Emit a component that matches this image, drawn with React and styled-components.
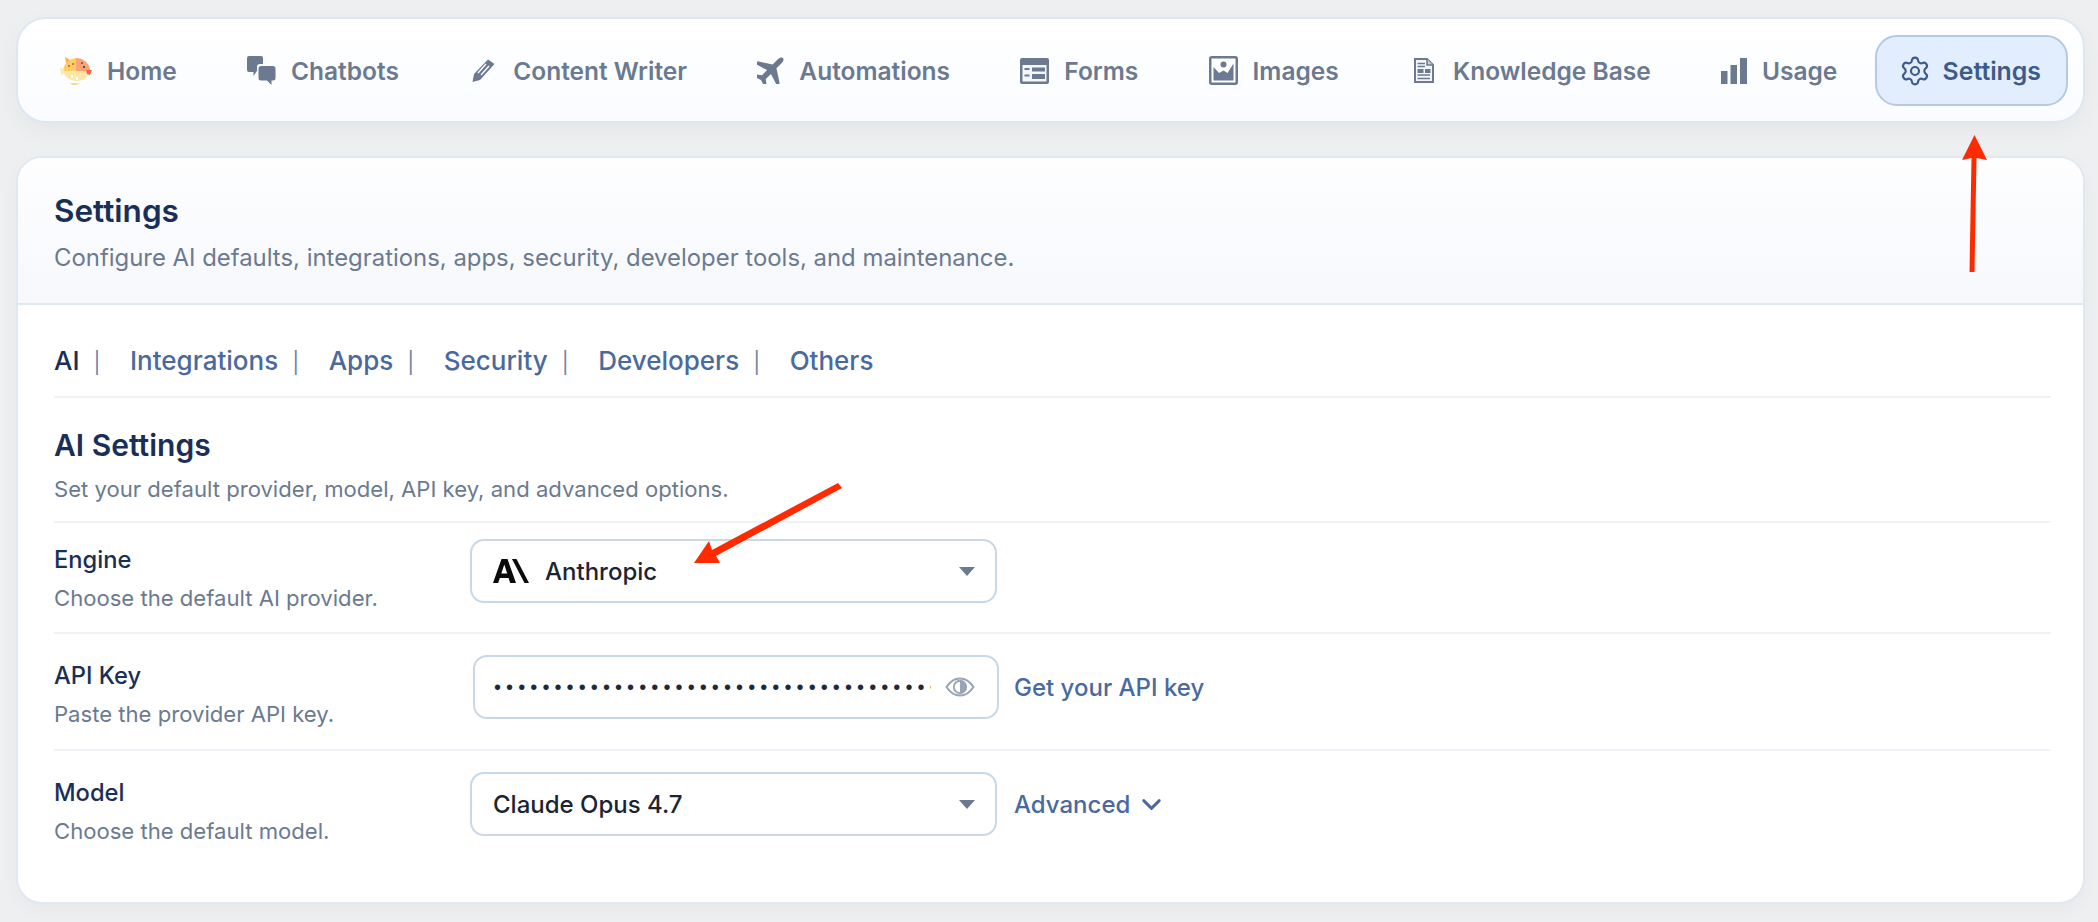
import styled, { createGlobalStyle } from "styled-components";
import { Settings as Gear, ChevronDown } from "lucide-react";

const GlobalStyle = createGlobalStyle`
  html, body {
    margin: 0;
    background: #eeeff1;
    font-family: Inter, "Liberation Sans", sans-serif;
  }
  * { box-sizing: border-box; }
`;

const HomeIcon = () => (
  <svg width="32" height="30" viewBox="0 0 32 30">
    <path d="M3 15 A14 14 0 0 1 16 2 V15 Z" fill="#fbcf63" />
    <path d="M16 2 A14 14 0 0 1 30 13 L30 15 H16 Z" fill="#fca374" />
    <path d="M3 15 H30 L28 20 A14 12 0 0 1 3 15 Z" fill="#fce7a8" />
    <path d="M26 14 H32 L30 19 L27 18 Z" fill="#f9634a" />
    <path d="M0 11 L4 14 L4 18 L1 19 Z" fill="#fde9b5" />
    <path d="M5 1 L10 4 L6 7 Z" fill="#fbb04d" />
    <rect x="8" y="9" width="2" height="2" fill="#ee6a3f" />
    <rect x="12" y="7" width="2" height="2" fill="#ee6a3f" />
    <rect x="21" y="6" width="2" height="2" fill="#b0574a" />
    <rect x="23" y="10" width="2" height="2" fill="#3f5578" />
    <rect x="11" y="19" width="2" height="3" fill="#fff" />
    <rect x="16" y="21" width="2" height="3" fill="#fff" />
    <path d="M10 27 h10 l-4 2 h-4 z" fill="#fbd98a" />
  </svg>
);

const ChatIcon = () => (
  <svg width="29" height="29" viewBox="0 0 29 29" fill="#6b7a90">
    <path d="M2 0 H14 A2 2 0 0 1 16 2 V8 H13 A3 3 0 0 0 10 11 V15 L6.500 20 V16 H2 A2 2 0 0 1 0 14 V2 A2 2 0 0 1 2 0 Z" />
    <path d="M14 10 H26 A2.500 2.500 0 0 1 28.500 12.500 V22 A2.500 2.500 0 0 1 26 24.500 H24.500 V29 L20 24.500 H14 A2.500 2.500 0 0 1 11.500 22 V12.500 A2.500 2.500 0 0 1 14 10 Z" />
  </svg>
);

const PencilIcon = () => (
  <svg width="23" height="23" viewBox="0 0 23 23">
    <path d="M16 0.500 L22.500 5 L8 21 L0.500 23 L2 15 Z" fill="#6b7a90" />
    <path d="M6 14 L14 5 M9 16 L17 7" stroke="#fff" strokeWidth="1.300" />
  </svg>
);

const PlaneIcon = () => (
  <svg width="27" height="27" viewBox="0 0 26 26" fill="#6b7a90">
    <path
      transform="rotate(45 13 13)"
      d="M13 -4 c1.500 0 2.600 2 2.600 4 V7.500 L28 15.500 v3.500 L15.600 15 V22 L19.500 25 V28 L13 26 L6.500 28 V25 L10.400 22 V15 L-2 19 V15.500 L10.400 7.500 V0 c0 -2 1.100 -4 2.600 -4 Z"
    />
  </svg>
);

const FormsIcon = () => (
  <svg width="29" height="26" viewBox="0 0 29 26">
    <rect width="29" height="26" rx="2" fill="#6b7a90" />
    <rect x="2.500" y="7" width="24" height="16.500" fill="#f4f6fa" />
    <rect x="4.500" y="10" width="5" height="2" fill="#6b7a90" />
    <rect x="4.500" y="16.500" width="5" height="2" fill="#6b7a90" />
    <rect x="12" y="9.500" width="13" height="4" fill="#6b7a90" />
    <rect x="12" y="16" width="13" height="5" fill="#6b7a90" />
  </svg>
);

const ImageIcon = () => (
  <svg width="29" height="29" viewBox="0 0 29 29">
    <rect x="1.250" y="1.250" width="26.500" height="26.500" rx="1.500" fill="#fff" stroke="#6b7a90" strokeWidth="2.500" />
    <circle cx="14.500" cy="8.500" r="3" fill="#6b7a90" />
    <path d="M4.500 24.500 V11 L10 17 L14.500 14.500 L18.500 17 L24.500 7.500 V24.500 Z" fill="#6b7a90" />
  </svg>
);

const DocIcon = () => (
  <svg width="20" height="25" viewBox="0 0 20 25">
    <path d="M1 1 H13 L19 7 V24 H1 Z" fill="#f4f6fa" stroke="#6b7a90" strokeWidth="2" />
    <path d="M13 1 V7 H19" fill="#c4ccd8" stroke="#6b7a90" strokeWidth="1.500" />
    <path d="M3.500 5.500 H11 M3.500 8.500 H11 M3.500 17 H16 M3.500 20.500 H16" stroke="#6b7a90" strokeWidth="1.500" />
    <rect x="3.500" y="11" width="6" height="4" fill="#6b7a90" />
    <rect x="11" y="11" width="5.500" height="4" fill="#6b7a90" />
  </svg>
);

const BarsIcon = () => (
  <svg width="26" height="26" viewBox="0 0 26 26" fill="#6b7a90">
    <rect x="0" y="13" width="6.500" height="13" />
    <rect x="9.500" y="7" width="6.500" height="19" />
    <rect x="19" y="0" width="7" height="26" />
  </svg>
);

const AnthropicLogo = () => (
  <svg width="36" height="24" viewBox="0 0 36 24" fill="#0b0b0b">
    <path d="M0 24 L8.500 0 H14.500 L23 24 H17.200 L15.600 19 H6.800 L5.200 24 Z M8.300 14.500 H14.200 L11.300 5.500 Z" />
    <path d="M19 0 H23.500 L36 24 H31.500 Z" />
  </svg>
);

const EyeIcon = () => (
  <svg width="30" height="20" viewBox="0 0 29 19">
    <path d="M1.500 9.500 C5 4 9.500 1.200 14.500 1.200 S24 4 27.500 9.500 C24 15 19.500 17.800 14.500 17.800 S5 15 1.500 9.500 Z" fill="none" stroke="#9aa5b4" strokeWidth="2" />
    <circle cx="14.500" cy="9.500" r="6" fill="none" stroke="#9aa5b4" strokeWidth="1.800" />
    <path d="M14.500 3.500 A6 6 0 0 1 14.500 15.500 Z" fill="#9aa5b4" />
  </svg>
);

const navItems = [
  { label: "Home", icon: <HomeIcon /> },
  { label: "Chatbots", icon: <ChatIcon /> },
  { label: "Content Writer", icon: <IconSlot><PencilIcon /></IconSlot> },
  { label: "Automations", icon: <PlaneIcon /> },
  { label: "Forms", icon: <FormsIcon /> },
  { label: "Images", icon: <ImageIcon /> },
  { label: "Knowledge Base", icon: <IconSlot><DocIcon /></IconSlot> },
  { label: "Usage", icon: <BarsIcon /> },
  { label: "Settings", icon: <NavGear size={32} strokeWidth={1.6} />, active: true },
];

const tabs = ["AI", "Integrations", "Apps", "Security", "Developers", "Others"];

const App = () => {
  return (
    <Page>
      <GlobalStyle />
      <Nav>
        {navItems.map((item) => (
          <NavItem key={item.label} $active={item.active}>
            {item.icon}
            <span>{item.label}</span>
          </NavItem>
        ))}
      </Nav>

      <Card>
        <CardHeader>
          <Title>Settings</Title>
          <Subtitle>Configure AI defaults, integrations, apps, security, developer tools, and maintenance.</Subtitle>
        </CardHeader>
        <CardBody>
          <Tabs>
            {tabs.map((tab, i) => (
              <Tab key={tab} $current={i === 0}>
                {tab}
                {i < tabs.length - 1 && <TabBar>|</TabBar>}
              </Tab>
            ))}
          </Tabs>

          <SectionTitle>AI Settings</SectionTitle>
          <SectionText>Set your default provider, model, API key, and advanced options.</SectionText>

          <Row $first>
            <RowText>
              <RowLabel>Engine</RowLabel>
              <RowHint>Choose the default AI provider.</RowHint>
            </RowText>
            <Field>
              <Select>
                <AnthropicLogo />
                <SelectValue>Anthropic</SelectValue>
                <Caret />
              </Select>
            </Field>
          </Row>

          <Row>
            <RowText>
              <RowLabel>API Key</RowLabel>
              <RowHint>Paste the provider API key.</RowHint>
            </RowText>
            <Field $shift>
              <KeyBox>
                <KeyInput type="password" readOnly value={"x".repeat(60)} />
                <EyeIcon />
              </KeyBox>
              <TextLink>Get your API key</TextLink>
            </Field>
          </Row>

          <Row>
            <RowText>
              <RowLabel>Model</RowLabel>
              <RowHint>Choose the default model.</RowHint>
            </RowText>
            <Field>
              <Select>
                <SelectValue>Claude Opus 4.7</SelectValue>
                <Caret />
              </Select>
              <TextLink>
                Advanced
                <ChevronDown size={31} strokeWidth={2.2} />
              </TextLink>
            </Field>
          </Row>
        </CardBody>
      </Card>

      {/* red arrows drawn on top of the screenshot */}
      <Annotations viewBox="0 0 2098 922">
        <path d="M1969.500 272 L1971.500 158 L1962 160 L1974.500 135 L1987 160 L1976.500 158 L1974.500 272 Z" fill="#ff2a00" />
        <path d="M838 483 L842 488 L716 556 L720 563 L694 563 L709 541 L712 550 Z" fill="#ff2a00" />
      </Annotations>
    </Page>
  );
};

export default App;

function NavGear(props) {
  return <GearGlyph {...props} />;
}

function IconSlot({ children }) {
  return <IconSlotBox>{children}</IconSlotBox>;
}

const GearGlyph = styled(Gear)`
  margin: 0 -3px;
`;

const IconSlotBox = styled.span`
  display: flex;
  justify-content: center;
  width: 29px;
`;

const Page = styled.div`
  position: relative;
  width: 2098px;
  height: 922px;
  padding: 17px 13px 0 16px;
  overflow: hidden;
`;

const Nav = styled.nav`
  display: flex;
  align-items: center;
  justify-content: space-between;
  height: 106px;
  padding: 1px 15px 0 16px;
  background: linear-gradient(#ffffff, #fafcff);
  border: 2px solid #dce7f4;
  border-radius: 30px;
  box-shadow: 0 8px 22px rgba(0, 0, 0, 0.04);
`;

const NavItem = styled.div`
  display: flex;
  align-items: center;
  gap: 15px;
  height: 71px;
  margin-left: ${(p) => (p.$active ? "-7px" : "0")};
  padding: 0 ${(p) => (p.$active ? "25px" : "24px")};
  border-radius: 22px;
  border: 2px solid ${(p) => (p.$active ? "#b4cae4" : "transparent")};
  background: ${(p) => (p.$active ? "#e2edfd" : "transparent")};
  color: ${(p) => (p.$active ? "#3c5a8b" : "#6b7a90")};
  font-size: ${(p) => (p.$active ? "24.8px" : "24.5px")};
  font-weight: 600;
  white-space: nowrap;
`;

const Card = styled.section`
  margin-top: 33px;
  height: 748px;
  background: #fff;
  border: 2px solid #e0e8f2;
  border-radius: 26px;
  box-shadow: 0 6px 18px rgba(0, 0, 0, 0.03);
  overflow: hidden;
`;

const CardHeader = styled.header`
  height: 147px;
  padding: 33px 36px 0;
  background: linear-gradient(#fefeff, #f6f8fc);
  border-bottom: 2px solid #dfe8f3;
`;

const Title = styled.h1`
  margin: 0;
  font-size: 31.5px;
  line-height: 40px;
  font-weight: 600;
  color: #1a2f57;
`;

const Subtitle = styled.p`
  margin: 10px 0 0;
  font-size: 23.9px;
  line-height: 34px;
  color: #6b7a90;
`;

const CardBody = styled.div`
  padding: 0 32px 0 36px;
`;

const Tabs = styled.div`
  display: flex;
  align-items: center;
  height: 93px;
  padding-top: 19px;
  border-bottom: 2px solid #eff2f6;
`;

const Tab = styled.span`
  font-size: 26px;
  font-weight: 500;
  color: ${(p) => (p.$current ? "#1a2f57" : "#4a6a9f")};
  white-space: nowrap;
`;

const TabBar = styled.span`
  margin: 0 29.5px 0 14px;
  color: #6e84a6;
  font-size: 21px;
  font-weight: 400;
`;

const SectionTitle = styled.h2`
  margin: 29px 0 0;
  font-size: 30px;
  line-height: 36px;
  font-weight: 600;
  color: #1a2f57;
`;

const SectionText = styled.p`
  margin: 10px 0 0;
  font-size: 22.1px;
  line-height: 32px;
  color: #6b7a90;
`;

const Row = styled.div`
  display: grid;
  grid-template-columns: 416px 1fr;
  align-items: start;
  margin-top: ${(p) => (p.$first ? "16px" : "0")};
  padding: ${(p) => (p.$first ? "16px 0 19px" : "21px 0 20px")};
  border-top: 2px solid #eff2f6;
`;

const RowText = styled.div`
  padding-top: 6px;
`;

const RowLabel = styled.div`
  font-size: 23.7px;
  line-height: 30px;
  font-weight: 500;
  color: #1a2f57;
`;

const RowHint = styled.div`
  margin-top: 8px;
  font-size: 22.1px;
  line-height: 30px;
  color: #6b7a90;
`;

const Field = styled.div`
  display: flex;
  align-items: center;
  gap: ${(p) => (p.$shift ? "15px" : "17px")};
  margin-left: ${(p) => (p.$shift ? "3px" : "0")};
`;

const Select = styled.div`
  display: flex;
  align-items: center;
  gap: 16px;
  width: 527px;
  height: 64px;
  padding: 0 20px 0 21px;
  background: #fff;
  border: 2px solid #c9d8e9;
  border-radius: 14px;
`;

const SelectValue = styled.span`
  flex: 1;
  font-size: 24px;
  font-weight: 500;
  color: #1b2433;
`;

const Caret = styled.span`
  width: 0;
  height: 0;
  border-left: 8px solid transparent;
  border-right: 8px solid transparent;
  border-top: 9px solid #6b7a90;
`;

const KeyBox = styled.div`
  display: flex;
  align-items: center;
  gap: 14px;
  width: 526px;
  height: 64px;
  padding: 0 22px 0 19px;
  background: #fff;
  border: 2px solid #c9d8e9;
  border-radius: 14px;
`;

const KeyInput = styled.input`
  width: 437px;
  padding: 0;
  border: 0;
  outline: 0;
  background: transparent;
  font-family: "Liberation Sans", sans-serif;
  font-size: 20px;
  letter-spacing: 5.1px;
  color: #1f2937;
`;

const TextLink = styled.span`
  display: inline-flex;
  align-items: center;
  gap: 6px;
  font-size: 24px;
  font-weight: 500;
  color: #4a6a9f;
  white-space: nowrap;
`;

const Annotations = styled.svg`
  position: absolute;
  top: 0;
  left: 0;
  width: 2098px;
  height: 922px;
  pointer-events: none;
`;
